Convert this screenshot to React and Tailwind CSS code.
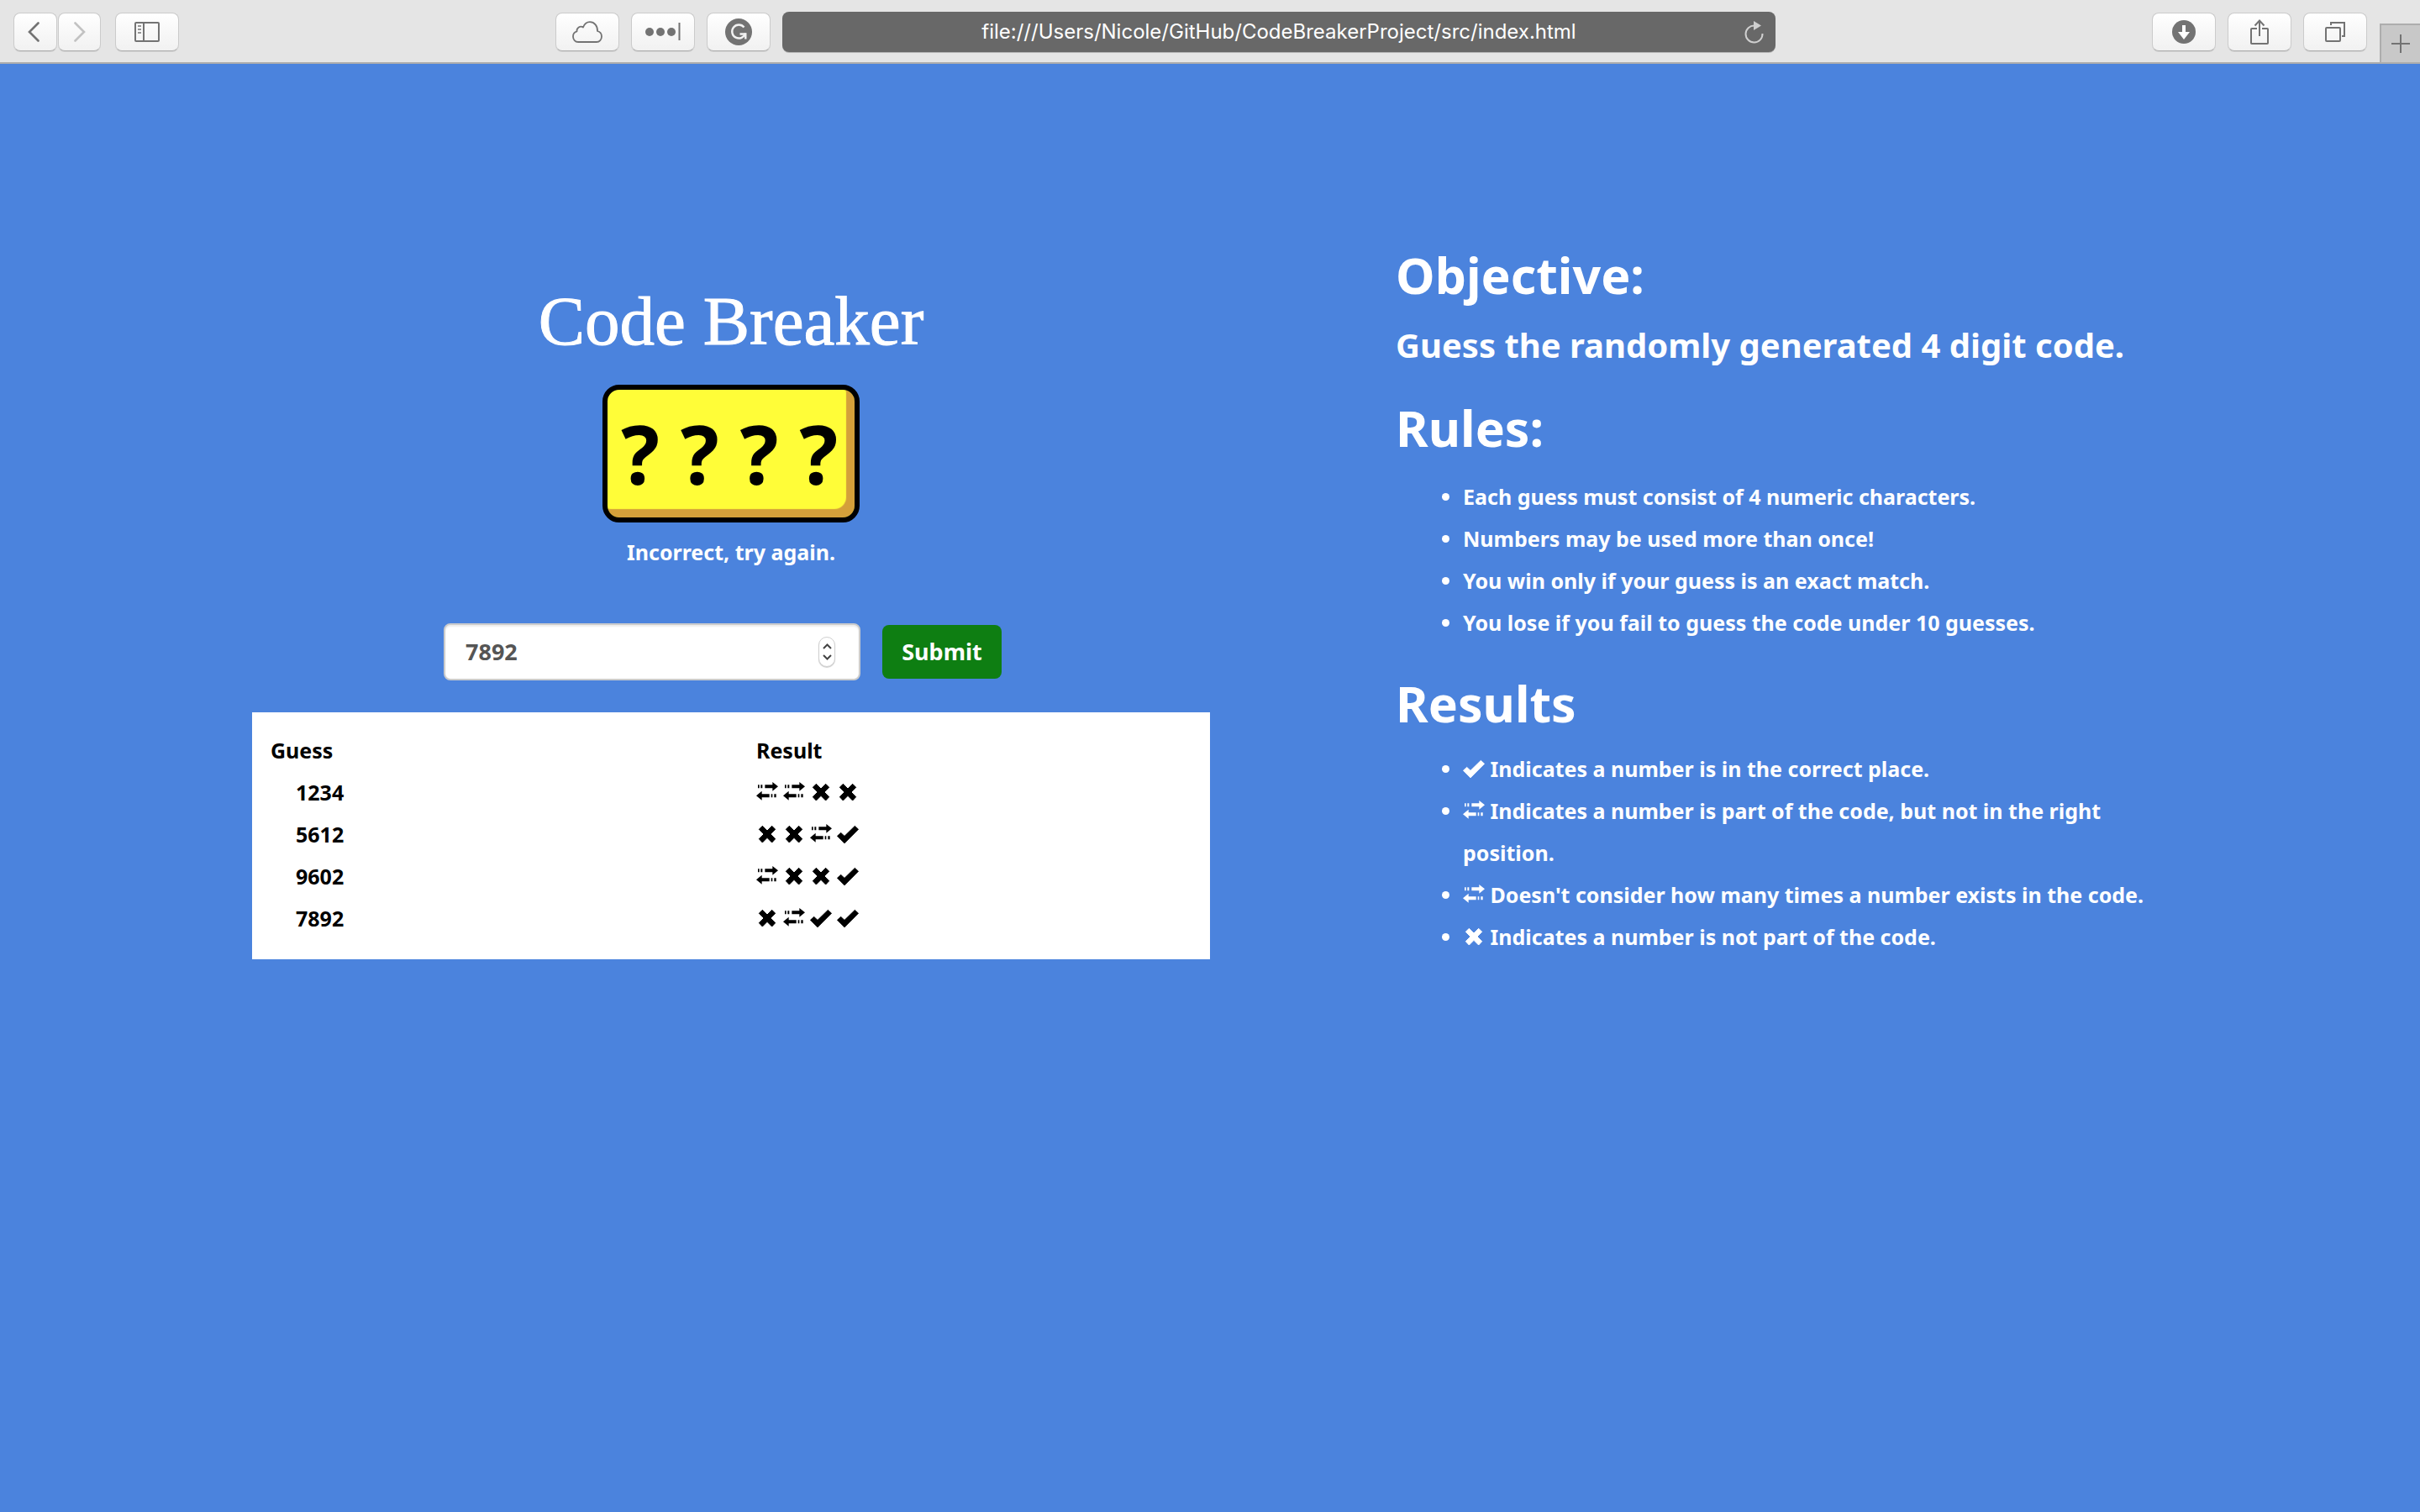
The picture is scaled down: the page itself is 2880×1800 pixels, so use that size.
import { useState } from "react";

function TransferIcon() {
  return (
    <svg viewBox="0 0 78 78" role="img" aria-label="Wrong position" className="inline-block size-[26px] align-[-3px]" fill="currentColor">
      <path d="M6 13h5v12H6zM16 13h6v12h-6zM31 13h27V3l20 16-20 16V25H31zM20 35v11h27v12H20v10L0 52zM53 46h5v12h-5zM64 46h7v12h-7z" />
    </svg>
  );
}

function CrossIcon() {
  return (
    <svg viewBox="0 0 78 78" role="img" aria-label="Not in code" className="inline-block size-[26px] align-[-3px]" fill="currentColor" stroke="currentColor" strokeWidth="3" strokeLinejoin="round">
      <path d="M22 10l17 17 17-17 12 12-17 17 17 17-12 13-17-17-17 17-12-13 17-17-17-17z" />
    </svg>
  );
}

function CheckIcon() {
  return (
    <svg viewBox="0 0 78 78" role="img" aria-label="Correct" className="inline-block size-[26px] align-[-3px]" fill="currentColor" stroke="currentColor" strokeWidth="2" strokeLinejoin="round">
      <path d="M1 46l13-12 13 12 37-36 13 12-50 50z" />
    </svg>
  );
}

const ICONS = { t: TransferIcon, x: CrossIcon, c: CheckIcon };

const GUESSES = [
  { code: "1234", marks: ["t", "t", "x", "x"] },
  { code: "5612", marks: ["x", "x", "t", "c"] },
  { code: "9602", marks: ["t", "x", "x", "c"] },
  { code: "7892", marks: ["x", "t", "c", "c"] },
];

function ToolButton({ label, width = "w-[76px]", children }) {
  return (
    <button
      type="button"
      aria-label={label}
      className={`${width} flex h-[46px] shrink-0 items-center justify-center rounded-lg border border-[#cbcbcb] border-b-[#b0b0b0] bg-linear-to-b from-white to-[#f1f1f1] text-[#737373] shadow-[0_1px_0_rgba(0,0,0,0.08)]`}
    >
      {children}
    </button>
  );
}

function Toolbar() {
  return (
    <header className="flex h-[76px] items-center border-b-2 border-[#adadad] bg-[#e5e5e5] pt-0.5 pl-4 font-['Inter',sans-serif]">
      <div className="flex gap-[17px]">
        <div className="flex gap-px">
          <ToolButton label="Back" width="w-[52px] pr-1">
            <svg className="h-6 w-[14px]" viewBox="0 0 14 24" fill="none" stroke="currentColor" strokeWidth="2.6" strokeLinecap="round">
              <path d="M12.500 1.500L2 12l10.500 10.500" />
            </svg>
          </ToolButton>
          <ToolButton label="Forward" width="w-[51px]">
            <svg className="h-6 w-[14px] text-[#c2c2c2]" viewBox="0 0 14 24" fill="none" stroke="currentColor" strokeWidth="2.600" strokeLinecap="round">
              <path d="M1.500 1.500L12 12 1.500 22.500" />
            </svg>
          </ToolButton>
        </div>
        <ToolButton label="Show sidebar">
          <svg className="h-6 w-[30px]" viewBox="0 0 30 24" fill="none" stroke="currentColor" strokeWidth="2">
            <rect x="1" y="1" width="28" height="22" rx="1" />
            <path d="M11 1v22" />
            <path d="M4 5h4M4 9h4M4 13h4" strokeOpacity=".75" />
          </svg>
        </ToolButton>
      </div>
      <div className="flex-[448]" />
      <div className="flex flex-[1450] items-center gap-[14px]">
        <ToolButton label="iCloud tabs">
          <svg className="h-[26px] w-9" viewBox="0 0 36 26" fill="none" stroke="currentColor" strokeWidth="1.800" strokeLinejoin="round">
            <path d="M7 25C3.500 25 1 22 1 18.500c0-3 1.700-5.500 4.500-6.200C5 8.500 9.500 5 13 7.500 14.500 3.500 17.500 1.200 21 1.200c5.500 0 9.300 4.700 9 10.800 3 .8 5 3.400 5 6.500 0 3.500-2.500 6.500-6 6.500z" />
          </svg>
        </ToolButton>
        <ToolButton label="Passwords">
          <svg className="h-[22px] w-[42px]" viewBox="0 0 42 22" fill="currentColor">
            <circle cx="5" cy="11" r="5" />
            <circle cx="18" cy="11" r="5" />
            <circle cx="31" cy="11" r="5" />
            <rect x="39.500" y="0" width="2" height="21" />
          </svg>
        </ToolButton>
        <ToolButton label="Grammarly">
          <svg className="size-8" viewBox="0 0 32 32">
            <circle cx="16" cy="16" r="16" fill="currentColor" />
            <path d="M22.500 10.500A8 8 0 1 0 24 17.500" fill="none" stroke="#f2f2f2" strokeWidth="2.400" />
            <path d="M17.500 18.500h6.800v6" fill="none" stroke="#f2f2f2" strokeWidth="2.400" />
          </svg>
        </ToolButton>
        <div className="relative flex h-12 flex-1 items-center rounded-lg bg-[#686868] shadow-[0_1px_0_rgba(0,0,0,0.2)]">
          <input
            aria-label="Address"
            defaultValue="file:///Users/Nicole/GitHub/CodeBreakerProject/src/index.html"
            className="w-full bg-transparent text-center text-2xl text-white outline-none"
          />
          <button type="button" aria-label="Reload" className="absolute right-[14px] text-[#cfcfcf]">
            <svg className="h-[27px] w-[23px]" viewBox="0 0 23 27" fill="none" stroke="currentColor" strokeWidth="2">
              <path d="M12 5.500A10 10 0 1 0 21.500 15" />
              <path d="M11 0l9 5.500-9 5.500z" fill="currentColor" stroke="none" />
            </svg>
          </button>
        </div>
      </div>
      <div className="flex-[448]" />
      <div className="flex items-center gap-[14px] self-stretch">
        <ToolButton label="Downloads">
          <svg className="size-7" viewBox="0 0 28 28">
            <circle cx="14" cy="14" r="14" fill="currentColor" />
            <path d="M12 6h4v8h5l-7 9-7-9h5z" fill="#fff" />
          </svg>
        </ToolButton>
        <ToolButton label="Share">
          <svg className="h-[30px] w-[22px]" viewBox="0 0 22 30" fill="none" stroke="currentColor" strokeWidth="2">
            <path d="M8 11H1.800a.8.8 0 0 0-.8.8v16.400c0 .5.300.8.800.8h18.400c.5 0 .8-.3.800-.8V11.800a.8.8 0 0 0-.8-.8H14M11 20V1.500M5.500 7.500L11 1.500l5.500 6" />
          </svg>
        </ToolButton>
        <ToolButton label="Show tabs">
          <svg className="size-6" viewBox="0 0 24 24" fill="none" stroke="currentColor" strokeWidth="2">
            <rect x="1" y="7" width="17" height="16" rx="1" />
            <path d="M7 4V1h16v16h-3" />
          </svg>
        </ToolButton>
        <button type="button" aria-label="New tab" className="ml-px flex h-[46px] w-12 items-center justify-center self-end border-t-2 border-l-2 border-[#adadad] bg-[#c8c8c8] text-[#737373]">
          <svg className="size-[22px]" viewBox="0 0 22 22" stroke="currentColor" strokeWidth="2">
            <path d="M0 11h22M11 0v22" />
          </svg>
        </button>
      </div>
    </header>
  );
}

function GuessForm() {
  const [value, setValue] = useState("7892");
  const step = (d) => setValue((v) => String(Number(v) + d));
  return (
    <form className="flex items-center justify-center gap-[26px] pr-5" onSubmit={(e) => e.preventDefault()}>
      <div className="relative flex w-[496px] items-center">
        <input
          type="number"
          aria-label="Your guess"
          value={value}
          onChange={(e) => setValue(e.target.value)}
          className="h-[68px] w-full [appearance:textfield] rounded-lg border-2 border-[#ccc] bg-white px-6 pb-0.5 text-[27px] font-bold text-[#555] shadow-[inset_0_2px_2px_rgba(0,0,0,0.08)] outline-none [&::-webkit-inner-spin-button]:appearance-none"
        />
        <div className="absolute right-[30px] flex h-9 w-5 flex-col items-center justify-evenly rounded-full border border-[#d0d0d0] bg-white text-[#444] shadow-[0_1px_1px_rgba(0,0,0,0.2)]">
          <button type="button" aria-label="Increase" onClick={() => step(1)}>
            <svg className="h-[7px] w-[11px]" viewBox="0 0 11 7" fill="none" stroke="currentColor" strokeWidth="2">
              <path d="M1 6l4.500-4.500L10 6" />
            </svg>
          </button>
          <button type="button" aria-label="Decrease" onClick={() => step(-1)}>
            <svg className="h-[7px] w-[11px]" viewBox="0 0 11 7" fill="none" stroke="currentColor" strokeWidth="2">
              <path d="M1 1l4.500 4.500L10 1" />
            </svg>
          </button>
        </div>
      </div>
      <button type="submit" className="h-16 w-[142px] rounded-lg bg-[#0e7e12] text-[27px] font-bold text-white">
        Submit
      </button>
    </form>
  );
}

function GuessTable() {
  return (
    <div className="bg-white px-5 pt-5 pb-6 text-black">
      <table className="w-full table-fixed text-left text-[25px] leading-[50px]">
        <thead>
          <tr>
            <th className="w-[580px] p-0 pl-0.5 font-bold">Guess</th>
            <th className="p-0 font-bold">Result</th>
          </tr>
        </thead>
        <tbody>
          {GUESSES.map((g) => (
            <tr key={g.code}>
              <td className="p-0 pl-8 font-bold">{g.code}</td>
              <td className="p-0">
                <div className="flex h-[50px] items-center gap-1.5">
                  {g.marks.map((m, i) => {
                    const Icon = ICONS[m];
                    return <Icon key={i} />;
                  })}
                </div>
              </td>
            </tr>
          ))}
        </tbody>
      </table>
    </div>
  );
}

function Heading({ children }) {
  return <h2 className="text-[59px] leading-[66px] font-bold">{children}</h2>;
}

export default function App() {
  return (
    <div className="flex min-h-screen flex-col bg-[#4b83dd] font-['Noto_Sans',sans-serif] text-white">
      <Toolbar />
      <main className="mx-auto grid w-full max-w-[2340px] grid-cols-2 px-[30px]">
        <section className="pt-[262px]">
          <h1 className="text-center font-['Liberation_Serif',serif] text-[83px] leading-[88px] [-webkit-text-stroke:1px_white]">Code Breaker</h1>
          <div className="mx-auto mt-8 flex h-[164px] w-[306px] items-center justify-center rounded-[20px] border-[6px] border-black bg-[#fffd38] pr-1 text-[96px] leading-none font-bold text-black shadow-[inset_-10px_-10px_1px_#d4a03a]">
            ? ? ? ?
          </div>
          <p className="mt-2.5 mb-[60px] text-center text-[25px] leading-[50px] font-bold">Incorrect, try again.</p>
          <GuessForm />
          <div className="mt-[38px]">
            <GuessTable />
          </div>
        </section>
        <section className="pt-[218px] pr-[20px] pl-[221px]">
          <Heading>Objective:</Heading>
          <p className="mt-[26px] mb-10 text-[40px] leading-[50px] font-bold">Guess the randomly generated 4 digit code.</p>
          <Heading>Rules:</Heading>
          <ul className="mt-6 mb-[38px] list-disc pl-20 text-[25px] leading-[50px] font-bold">
            <li>Each guess must consist of 4 numeric characters.</li>
            <li>Numbers may be used more than once!</li>
            <li>You win only if your guess is an exact match.</li>
            <li>You lose if you fail to guess the code under 10 guesses.</li>
          </ul>
          <Heading>Results</Heading>
          <ul className="mt-5 list-disc pl-20 text-[25px] leading-[50px] font-bold">
            <li><CheckIcon /> Indicates a number is in the correct place.</li>
            <li><TransferIcon /> Indicates a number is part of the code, but not in the right position.</li>
            <li><TransferIcon /> Doesn't consider how many times a number exists in the code.</li>
            <li><CrossIcon /> Indicates a number is not part of the code.</li>
          </ul>
        </section>
      </main>
    </div>
  );
}
